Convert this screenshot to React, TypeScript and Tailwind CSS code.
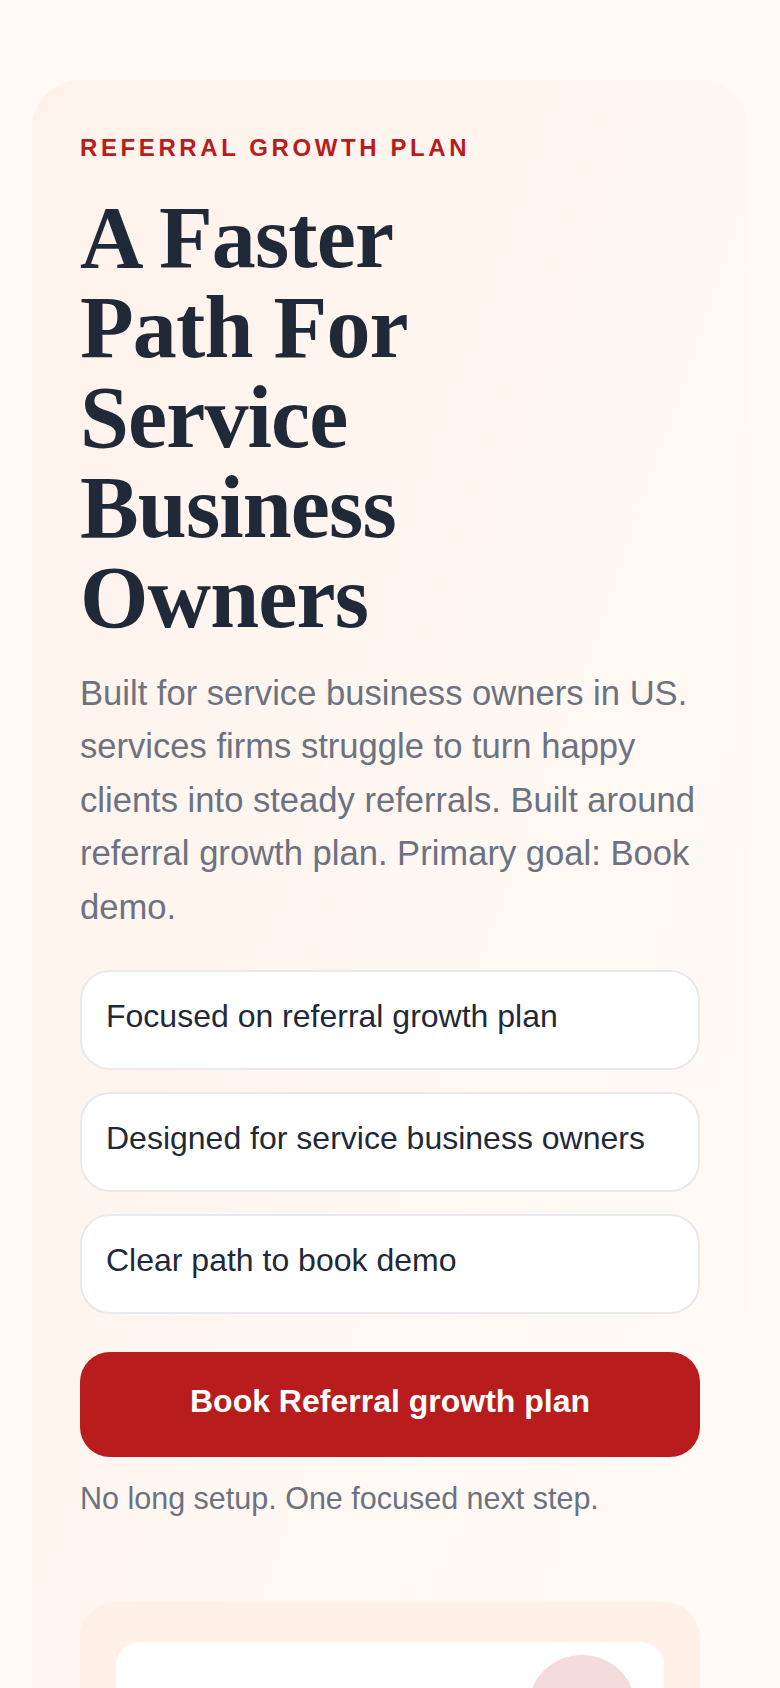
export default function App() {
  const points = [
    "Focused on referral growth plan",
    "Designed for service business owners",
    "Clear path to book demo",
  ];

  return (
    <div className="min-h-screen bg-[#fffaf6] px-8 pt-20 pb-20 font-['Liberation_Sans',Arial,sans-serif]">
      <section className="rounded-[48px] bg-linear-to-br from-[#fff2eb] via-[#fff7f2] to-[#fffbf8] px-12 pt-[50px] pb-12">
        <p className="text-[24px] leading-[36px] font-bold uppercase tracking-[0.15em] text-[#b91c1c]">
          Referral growth plan
        </p>
        <h1 className="mt-[27px] max-w-[430px] font-['Liberation_Serif',serif] text-[88px] leading-[90px] font-bold tracking-[-0.01em] text-[#1f2937]">
          A Faster Path For Service Business Owners
        </h1>
        <p className="mt-6 text-[34.6px] leading-[53.4px] text-[#6b7280]">
          Built for service business owners in US. services firms struggle to turn happy clients into
          steady referrals. Built around referral growth plan. Primary goal: Book demo.
        </p>

        <ul className="mt-9 flex flex-col gap-[22px]">
          {points.map((p) => (
            <li
              key={p}
              className="rounded-[30px] border-2 border-[#e9e9ec] bg-white px-6 pt-5 pb-[28px] text-[32px] leading-[48px] text-[#1f2937]"
            >
              {p}
            </li>
          ))}
        </ul>

        <button
          type="button"
          className="mt-[38px] w-full rounded-[30px] bg-[#b91c1c] pt-[25px] pb-[32px] text-[32px] leading-[48px] font-bold text-white"
        >
          Book Referral growth plan
        </button>
        <p className="mt-[19px] text-[30.5px] leading-[45px] text-[#6b7280]">
          No long setup. One focused next step.
        </p>

        <div className="mt-[81px] rounded-[36px] bg-[#fff0e8] px-9 pt-10 pb-10">
          <div className="relative h-[420px] rounded-[24px] bg-white">
            <div className="absolute top-[13px] right-[28px] h-[108px] w-[108px] rounded-full bg-[#f4dcdc]" />
          </div>
        </div>
      </section>
    </div>
  );
}
